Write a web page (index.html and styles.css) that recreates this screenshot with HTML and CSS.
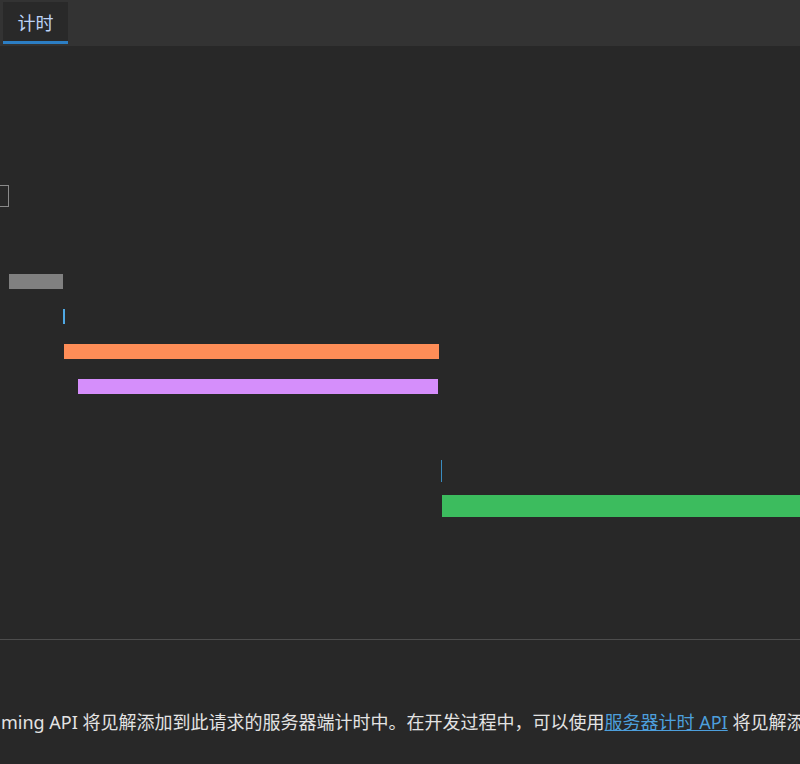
FILE: index.html
```html
<!DOCTYPE html>
<html lang="zh-CN">
<head>
<meta charset="utf-8">
<title>计时</title>
<link rel="stylesheet" href="styles.css">
</head>
<body>
<div class="tabbar">
  <div class="tab">计时</div>
</div>
<div class="content">
  <div class="box"></div>
  <div class="rows">
    <div class="row"><div class="bar gray" style="margin-left:9px;width:54px"></div></div>
    <div class="row"><div class="bar tick" style="margin-left:63px;width:2px"></div></div>
    <div class="row"><div class="bar orange" style="margin-left:64px;width:375px"></div></div>
    <div class="row"><div class="bar purple" style="margin-left:78px;width:360px"></div></div>
  </div>
  <div class="rows2">
    <div class="row2"><div class="bar2 line" style="margin-left:441px;width:1px"></div></div>
    <div class="row2"><div class="bar2 green" style="margin-left:442px;width:400px"></div></div>
  </div>
  <div class="sep"></div>
  <p class="note">ming API 将见解添加到此请求的服务器端计时中。在开发过程中，可以使用<a href="#">服务器计时 API</a> 将见解添加到此请求的服务器端计时中。</p>
</div>
</body>
</html>
```

FILE: styles.css
```css
html, body {
  margin: 0;
  padding: 0;
  background: #282828;
  width: 800px;
  height: 764px;
  overflow: hidden;
  font-family: "Noto Sans", "Noto Sans CJK SC", sans-serif;
}
.tabbar {
  height: 46px;
  background: #333333;
  display: flex;
  align-items: flex-start;
}
.tab {
  margin-left: 3px;
  margin-top: 2px;
  width: 65px;
  height: 42px;
  box-sizing: border-box;
  background: #292929;
  border-bottom: 3px solid #2c7ec4;
  color: #bcd2f6;
  font-size: 18px;
  line-height: 40px;
  text-align: center;
  font-family: "Noto Sans CJK SC", sans-serif;
}
.content {
  display: flex;
  flex-direction: column;
}
.box {
  margin-top: 139px;
  margin-left: -30px;
  width: 37px;
  height: 20px;
  border: 1px solid #8a8a8a;
}
.rows {
  margin-top: 67px;
  display: flex;
  flex-direction: column;
}
.row {
  height: 35px;
  display: flex;
}
.bar {
  height: 15px;
  flex: none;
}
.gray { background: #808080; }
.tick { background: #4fa8e3; }
.orange { background: #fe8d57; }
.purple { background: #d58efb; }
.rows2 {
  margin-top: 46px;
  display: flex;
  flex-direction: column;
}
.row2 {
  height: 35px;
  display: flex;
}
.bar2 {
  height: 22px;
  flex: none;
}
.line { background: #3a8cc0; }
.green { background: #3cbc5e; }
.sep {
  margin-top: 109px;
  height: 1px;
  background: #4d4d4d;
}
.note {
  margin: 69px 0 0 1px;
  white-space: nowrap;
  color: #e3e3e3;
  font-size: 18px;
  line-height: 27px;
}
.note a {
  color: #4d9fdc;
  text-decoration: underline;
}
```
